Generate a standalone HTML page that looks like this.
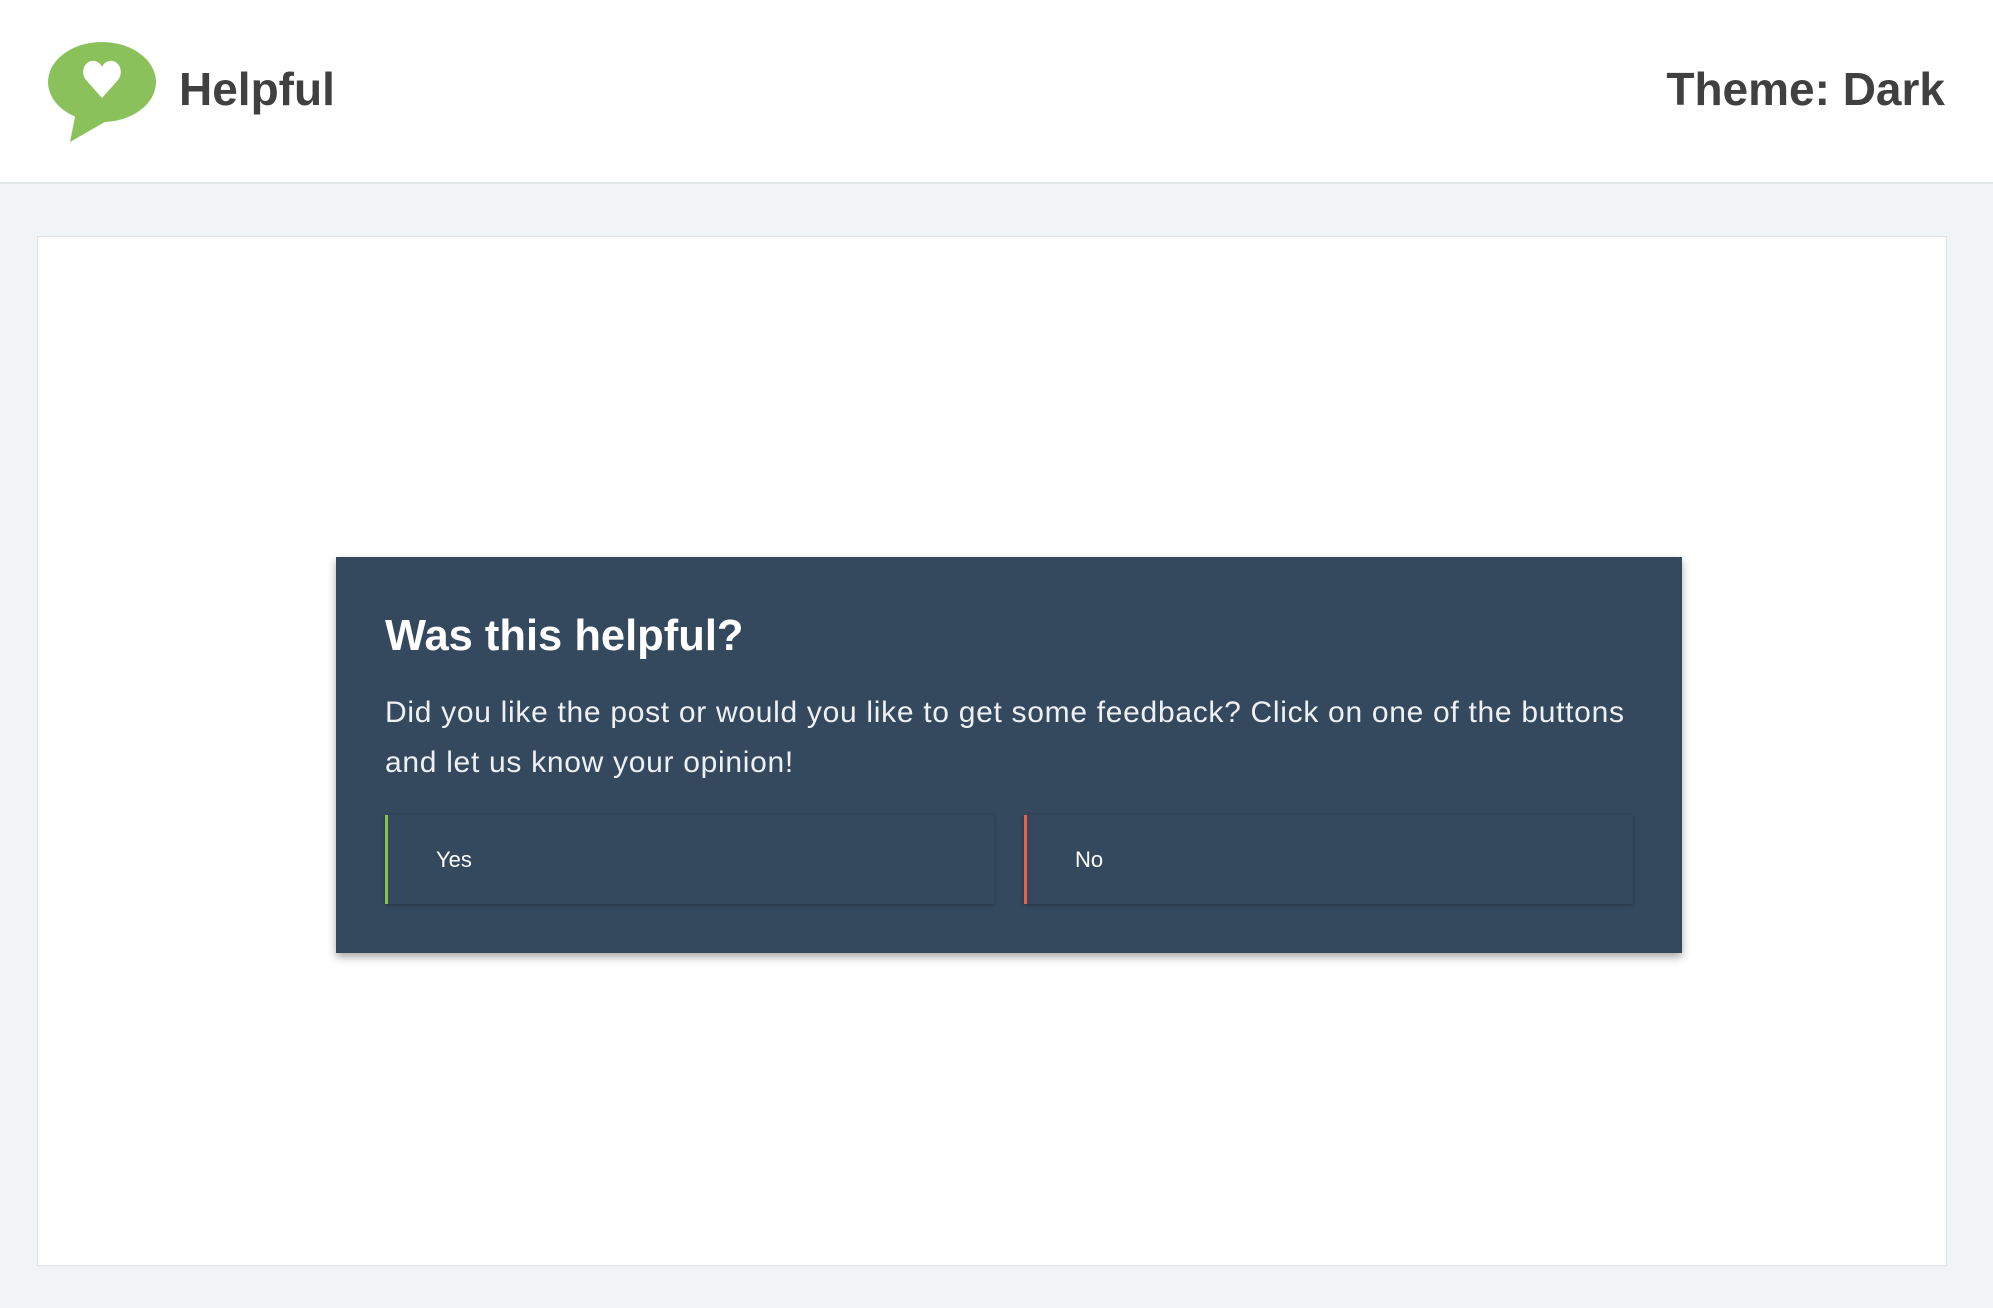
<!DOCTYPE html>
<html><head><meta charset="utf-8"><style>
*{margin:0;padding:0;box-sizing:border-box}
html,body{width:1993px;height:1308px;overflow:hidden;background:#f1f4f7;font-family:"Liberation Sans",sans-serif}
.header{position:absolute;left:0;top:0;width:1993px;height:184px;background:#fff;border-bottom:2px solid #e2e5e8}
.logo{position:absolute;left:48px;top:42px}
.brand{position:absolute;left:179px;top:62px;font-size:46px;font-weight:bold;color:#404040}
.theme{position:absolute;right:48px;top:62px;font-size:46px;font-weight:bold;color:#404040}
.card{position:absolute;left:37px;top:236px;width:1910px;height:1030px;background:#fff;border:1px solid #e2e5e8}
.box{position:absolute;left:336px;top:557px;width:1346px;height:396px;background:#35495e;box-shadow:0 4px 8px rgba(0,0,0,.35)}
h2{position:absolute;left:49px;top:55px;font-size:43.5px;font-weight:bold;color:#fff;white-space:nowrap}
p{position:absolute;left:49px;top:131px;font-size:30px;letter-spacing:0.7px;line-height:50px;color:#eef1f4;white-space:nowrap}
.btn{position:absolute;top:258px;height:89px;width:609px;background:#35495e;box-shadow:0 1px 4px rgba(0,0,0,.3);color:#fff;font-size:22px;padding-left:48px;line-height:89px}
.yes{left:49px;border-left:3px solid #8bc34a}
.no{left:688px;border-left:3px solid #e8604c}
</style></head><body>
<div class="header">
<svg class="logo" width="110" height="100" viewBox="0 0 110 100">
<ellipse cx="54" cy="40" rx="54" ry="40" fill="#8bc15a"/>
<path d="M28 70 L22 100 L62 77 Z" fill="#8bc15a"/>
<path d="M54 56 L38 38 C31 29 38 17 47 19 C50 20 53 22 54 25 C55 22 58 20 61 19 C70 17 77 29 70 38 Z" fill="#fff"/>
</svg>
<div class="brand">Helpful</div>
<div class="theme">Theme: Dark</div>
</div>
<div class="card"></div>
<div class="box">
<h2>Was this helpful?</h2>
<p>Did you like the post or would you like to get some feedback? Click on one of the buttons<br>and let us know your opinion!</p>
<div class="btn yes">Yes</div>
<div class="btn no">No</div>
</div>
</body></html>
